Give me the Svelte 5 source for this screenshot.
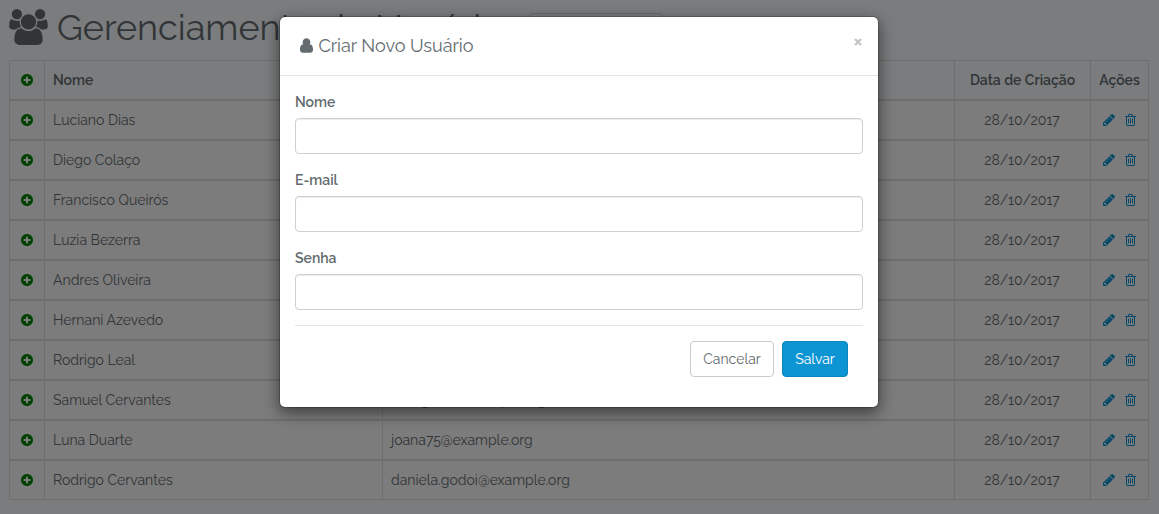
<script>
  const names = [
    'Luciano Dias', 'Diego Colaço', 'Francisco Queirós', 'Luzia Bezerra', 'Andres Oliveira',
    'Hernani Azevedo', 'Rodrigo Leal', 'Samuel Cervantes', 'Luna Duarte', 'Rodrigo Cervantes'
  ];
  const mails = { 7: 'rodrigo99@example.org', 8: 'joana75@example.org', 9: 'daniela.godoi@example.org' };
  const fields = ['Nome', 'E-mail', 'Senha'];
</script>

{#snippet plus()}
  <svg class="plus" viewBox="0 0 1536 1536"><path d="M1216 832V704q0-26-19-45t-45-19H896V384q0-26-19-45t-45-19H704q-26 0-45 19t-19 45v256H384q-26 0-45 19t-19 45v128q0 26 19 45t45 19h256v256q0 26 19 45t45 19h128q26 0 45-19t19-45V896h256q26 0 45-19t19-45zm320-64q0 209-103 385.500T1153.500 1433 768 1536t-385.500-103T103 1153.500 0 768t103-385.500T382.500 103 768 0t385.500 103T1433 382.500 1536 768z"/></svg>
{/snippet}

<div class="page">
  <h1>
    <svg class="users" viewBox="0 0 1920 1792"><path d="M593 896q-162 5-265 128H194q-82 0-138-40.500T0 865q0-353 124-353 6 0 43.500 21t97.500 42.500T384 597q67 0 133-23-5 37-5 66 0 139 81 256zm1071 637q0 120-73 189.500t-194 69.500H523q-121 0-194-69.500T256 1533q0-53 3.500-103.500t14-109T300 1212t43-97.500 62-81 85.500-53.500T602 960q10 0 43 21.500t73 48 107 48 135 21.500 135-21.500 107-48 73-48 43-21.500q61 0 111.500 20t85.500 53.500 62 81 43 97.500 26.500 108.500 14 109 3.500 103.500zM640 256q0 106-75 181t-181 75-181-75-75-181 75-181T384 0t181 75 75 181zm704 384q0 159-112.500 271.500T960 1024 688.500 911.500 576 640t112.500-271.500T960 256t271.500 112.500T1344 640zm576 225q0 78-56 118.500t-138 40.500h-134q-103-123-265-128 81-117 81-256 0-29-5-66 66 23 133 23 59 0 119-21.500t97.500-42.500 43.500-21q124 0 124 353zm-128-609q0 106-75 181t-181 75-181-75-75-181 75-181 181-75 181 75 75 181z"/></svg>
    <span>Gerenciamento de Usuários</span>
    <span class="new"></span>
  </h1>
  <div class="table">
    <div class="row head">
      <div class="c">{@render plus()}</div>
      <div>Nome</div>
      <div>E-mail</div>
      <div class="c">Data de Criação</div>
      <div class="c">Ações</div>
    </div>
    {#each names as name, i}
      <div class="row">
        <div class="c">{@render plus()}</div>
        <div>{name}</div>
        <div>{mails[i] ?? ''}</div>
        <div class="c date">28/10/2017</div>
        <div class="c act">
          <svg class="pencil" viewBox="0 0 1515 1515"><path d="M363 1387l91-91-235-235-91 91v107h128v128h107zm523-928q0-22-22-22-10 0-17 7l-542 542q-7 7-7 17 0 22 22 22 10 0 17-7l542-542q7-7 7-17zm-54-192l416 416-832 832H0v-416zm683 96q0 53-37 90l-166 166-416-416 166-165q36-38 90-38 53 0 91 38l235 234q37 39 37 91z"/></svg>
          <svg class="trash" viewBox="0 0 1408 1536"><path d="M512 608v576q0 14-9 23t-23 9h-64q-14 0-23-9t-9-23V608q0-14 9-23t23-9h64q14 0 23 9t9 23zm256 0v576q0 14-9 23t-23 9h-64q-14 0-23-9t-9-23V608q0-14 9-23t23-9h64q14 0 23 9t9 23zm256 0v576q0 14-9 23t-23 9h-64q-14 0-23-9t-9-23V608q0-14 9-23t23-9h64q14 0 23 9t9 23zm128 724V384H256v948q0 22 7 40.500t14.500 27 10.500 8.500h832q3 0 10.500-8.500t14.500-27 7-40.500zM480 256h448l-48-117q-7-9-17-11H546q-10 2-17 11zm928 32v64q0 14-9 23t-23 9h-96v948q0 83-47 143.500t-113 60.500H288q-66 0-113-58.500T128 1336V384H32q-14 0-23-9t-9-23v-64q0-14 9-23t23-9h309l70-167q15-37 54-63t79-26h320q40 0 79 26t54 63l70 167h309q14 0 23 9t9 23z"/></svg>
        </div>
      </div>
    {/each}
  </div>
</div>
<div class="overlay">
  <div class="modal">
    <header>
      <h4>
        <svg class="user" viewBox="0 0 1280 1408"><path d="M1280 1143q0 109-62.500 187t-150.500 78H213q-88 0-150.500-78T0 1143q0-85 8.500-160.500t31.500-152 58.500-131 94-89T327 576q131 128 313 128t313-128q76 0 134.500 34.500t94 89 58.500 131 31.500 152 8.500 160.500zm-256-759q0 159-112.500 271.500T640 768 368.500 655.500 256 384t112.500-271.500T640 0t271.500 112.500T1024 384z"/></svg>
        <span>Criar Novo Usuário</span>
      </h4>
      <button class="close" aria-label="Fechar"><svg viewBox="0 0 8 8"><path d="M1 1l6 6M7 1l-6 6"/></svg></button>
    </header>
    <form>
      {#each fields as text}
        <label>{text}<input type="text" /></label>
      {/each}
      <footer>
        <button type="button" class="btn">Cancelar</button>
        <button type="button" class="btn primary">Salvar</button>
      </footer>
    </form>
  </div>
</div>

<style>
  :global(body) { background: #f5f8fa; overflow: hidden; }
  .page, .overlay { box-sizing: border-box; font: 14px/20px Raleway, Lato, sans-serif; color: #636b6f; }
  .page *, .overlay * { box-sizing: border-box; }
  svg { display: block; fill: currentColor; flex: none; }
  .page { height: 514px; padding: 8px 10px 0 9px; overflow: hidden; }
  h1 { display: flex; align-items: center; gap: 9px; height: 40px; margin: 0 0 12px; font-size: 36px; line-height: 38px; font-weight: 400; white-space: nowrap; }
  h1 > span:not(.new) { width: 463px; margin-top: -2px; }
  .users { width: 39px; height: 36px; align-self: flex-start; margin-top: 1px; }
  .new { width: 134px; height: 36px; margin: 5px 0 0; align-self: flex-start; border: 1px solid #ccd0d2; border-radius: 4px; }
  .table { border: 1px solid #ddd; }
  .row { display: grid; grid-template-columns: 35px 338px 572px 136px 57px; height: 40px; background: #f9f9f9; border-bottom: 2px solid #ddd; }
  .row:last-child { height: 38px; border-bottom: 0; }
  .row > div { padding: 9px 8px 0; border-right: 1px solid #ddd; }
  .row > div:last-child { border-right: 0; }
  .head { font-weight: 600; background: transparent; }
  .row > .c { display: flex; justify-content: center; align-items: flex-start; padding-left: 0; padding-right: 0; }
  .row > .date { padding-right: 1px; }
  .plus { width: 12px; height: 12px; margin-top: 4px; color: #008000; }
  .row > .act { gap: 10px; padding-right: 1px; color: #0d95d3; }
  .pencil { width: 12px; height: 12px; margin-top: 4px; }
  .trash { width: 11px; height: 12px; margin-top: 4px; }
  .overlay { position: absolute; inset: 0; background: rgba(0, 0, 0, .5); display: flex; align-items: flex-start; padding: 16px 0 0 279px; overflow: hidden; }
  .modal { width: 600px; height: 392px; background: #fff; background-clip: padding-box; border: 1px solid rgba(0, 0, 0, .2); border-radius: 6px; box-shadow: 0 5px 15px rgba(0, 0, 0, .5); }
  header { display: flex; justify-content: space-between; height: 59px; border-bottom: 1px solid #e5e5e5; padding: 19px 16px 0 20px; }
  h4 { display: flex; gap: 5.4px; margin: 0; font-size: 18px; line-height: 20px; font-weight: 400; }
  .user { width: 13px; height: 15px; margin-top: 2px; }
  .close { display: block; width: 8px; height: 8px; margin-top: 2px; padding: 0; border: 0; background: none; color: #c4c6c7; }
  .close svg { stroke: currentColor; stroke-width: 2.4; fill: none; }
  form { padding: 16px 15px 0; }
  label { display: block; height: 62px; margin-bottom: 16px; font-weight: 600; }
  input { display: block; width: 100%; height: 36px; margin-top: 6px; border: 1px solid #ccd0d2; border-radius: 4px; box-shadow: inset 0 1px 1px rgba(0, 0, 0, .075); }
  footer { display: flex; justify-content: flex-end; gap: 8px; border-top: 1px solid #e5e5e5; padding: 15px 15px 0; margin-top: -1px; }
  .btn { height: 36px; width: 84px; padding: 0; border: 1px solid #ccc; border-radius: 4px; background: #fff; color: #636b6f; font: inherit; }
  .primary { width: 66px; background: #0d95d3; border-color: #0b85bd; color: #fff; }
</style>
